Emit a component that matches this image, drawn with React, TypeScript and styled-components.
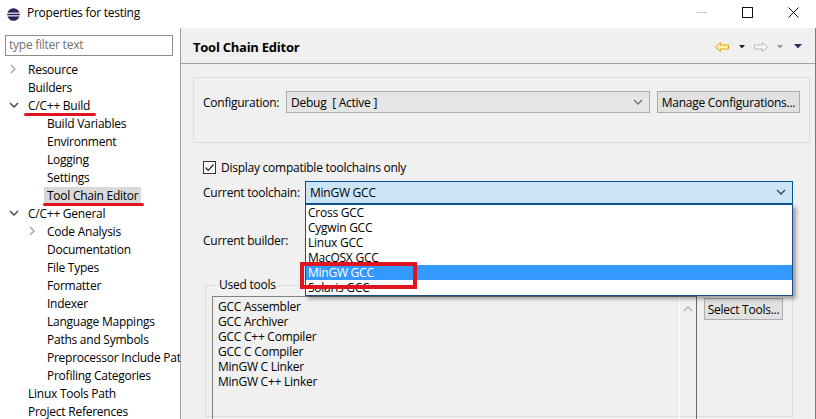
import styled, { createGlobalStyle } from 'styled-components';

const GlobalStyle = createGlobalStyle`
  html, body { margin: 0; padding: 0; }
  body {
    font-family: 'Open Sans', 'Noto Sans', sans-serif;
    font-size: 12px;
    letter-spacing: -0.25px;
    color: #000;
    background: #fff;
  }
`;

const Window = styled.div`
  width: 816px;
  height: 419px;
  display: flex;
  flex-direction: column;
  overflow: hidden;
`;

const TitleBar = styled.div`
  height: 28px;
  display: flex;
  align-items: center;
  background: #fff;
  padding-left: 7px;
`;

const TitleText = styled.span`
  margin-left: 7px;
  line-height: 16px;
  margin-top: -2px;
`;

const WinControls = styled.div`
  margin-left: auto;
  display: flex;
  align-items: center;
  height: 100%;
`;

const WinButton = styled.div`
  width: 46px;
  height: 100%;
  display: flex;
  align-items: center;
  justify-content: center;
  margin-top: -3px;
`;

const Body = styled.div`
  flex: 1;
  display: flex;
  min-height: 0;
`;

const Sidebar = styled.div`
  width: 180px;
  border-right: 1px solid #a0a0a0;
  background: #fff;
  overflow: hidden;
  padding-top: 7px;
`;

const FilterBox = styled.div`
  margin-left: 5px;
  width: 163px;
  height: 19px;
  border: 1px solid #8c8c8c;
  color: #707070;
  padding-left: 3px;
  line-height: 18px;
  box-sizing: content-box;
`;

const Tree = styled.div`
  margin-top: 4px;
`;

const TreeRow = styled.div<{ level: number }>`
  height: 18px;
  display: flex;
  align-items: center;
  padding-left: ${({ level }) => 8 + level * 19}px;
  white-space: nowrap;
`;

const Twisty = styled.span`
  width: 12px;
  margin-right: 8px;
  display: flex;
  justify-content: center;
  flex-shrink: 0;
`;

const TreeLabel = styled.span<{ selected?: boolean }>`
  position: relative;
  margin-left: -3px;
  padding: 0 3px;
  line-height: 17px;
  background: ${({ selected }) => (selected ? '#d9d9d9' : 'transparent')};
`;

const RedUnderline = styled.span`
  position: absolute;
  left: -1px;
  right: -3px;
  bottom: -2px;
  height: 3px;
  border-radius: 2px;
  background: #e0141e;
`;

const Main = styled.div`
  flex: 1;
  background: #f0f0f0;
  border-right: 1px solid #7a7a7a;
  display: flex;
  flex-direction: column;
  min-width: 0;
`;

const Header = styled.div`
  height: 35px;
  border-bottom: 1px solid #a0a0a0;
  display: flex;
  align-items: center;
  padding-left: 12px;
  padding-right: 13px;
`;

const HeaderTitle = styled.span`
  font-weight: bold;
  font-size: 13px;
  margin-top: 3px;
`;

const NavIcons = styled.div`
  margin-left: auto;
  display: flex;
  align-items: center;
  margin-top: 2px;
`;

const NavGap = styled.span<{ size: number }>`
  width: ${({ size }) => size}px;
`;

const Content = styled.div`
  padding: 13px 5px 0 12px;
  display: flex;
  flex-direction: column;
`;

const GroupBox = styled.div`
  border: 1px solid #dcdcdc;
  padding: 13px 9px 0 9px;
  box-sizing: border-box;
  height: 66px;
`;

const Row = styled.div`
  display: flex;
  align-items: center;
  height: 22px;
`;

const FieldLabel = styled.span<{ width: number }>`
  width: ${({ width }) => width}px;
  flex-shrink: 0;
`;

const Combo = styled.div<{ focused?: boolean; width: number }>`
  width: ${({ width }) => width}px;
  height: ${({ focused }) => (focused ? 23 : 22)}px;
  box-sizing: border-box;
  border: 1px solid ${({ focused }) => (focused ? '#005499' : '#acacac')};
  background: ${({ focused }) => (focused ? '#cce4f7' : '#e5e5e5')};
  display: flex;
  align-items: center;
  padding: 0 6px 0 4px;
  position: relative;
`;

const ComboText = styled.span`
  flex: 1;
  white-space: pre;
`;

const Button = styled.div<{ width: number }>`
  width: ${({ width }) => width}px;
  height: 22px;
  box-sizing: border-box;
  border: 1px solid #adadad;
  background: #e1e1e1;
  display: flex;
  align-items: center;
  justify-content: center;
  margin-left: 7px;
  flex-shrink: 0;
`;

const Lower = styled.div`
  padding-left: 10px;
  display: flex;
  flex-direction: column;
`;

const CheckRow = styled.div`
  display: flex;
  align-items: center;
  height: 18px;
  margin-top: 15px;
  margin-bottom: 5px;
`;

const CheckBox = styled.span`
  width: 13px;
  height: 13px;
  box-sizing: border-box;
  border: 1px solid #333;
  background: #fff;
  display: flex;
  align-items: center;
  justify-content: center;
  margin-right: 5px;
`;

const DropList = styled.div`
  position: absolute;
  left: -1px;
  top: 22px;
  width: 488px;
  height: 92px;
  box-sizing: border-box;
  border: 1px solid #1c4f7f;
  background: #fff;
  box-shadow: 3px 3px 4px rgba(0, 0, 0, 0.35);
  z-index: 2;
`;

const DropItem = styled.div<{ selected?: boolean }>`
  height: 15px;
  line-height: 15px;
  padding-left: 2px;
  background: ${({ selected }) => (selected ? '#3399ff' : 'transparent')};
  color: ${({ selected }) => (selected ? '#fff' : '#000')};
`;

const RedBox = styled.div`
  position: absolute;
  left: -6px;
  top: 80px;
  width: 117px;
  height: 27px;
  box-sizing: border-box;
  border: 4px solid #e0141e;
  z-index: 3;
`;

const BuilderRow = styled(Row)`
  margin-top: 26px;
`;

const Fieldset = styled.fieldset`
  margin: 26px 0 0 2px;
  width: 588px;
  box-sizing: border-box;
  border: 1px solid #dcdcdc;
  padding: 3px 9px 0 6px;
  height: 140px;
  display: flex;
  align-items: flex-start;
`;

const Legend = styled.legend`
  padding: 0 3px;
  margin-left: 4px;
  line-height: 16px;
`;

const ToolsList = styled.div`
  width: 485px;
  height: 130px;
  box-sizing: border-box;
  border: 1px solid #828282;
  border-right-color: #6a6a6a;
  display: flex;
  flex-shrink: 0;
`;

const ToolsItems = styled.div`
  flex: 1;
  padding: 2px 0 0 5px;
  line-height: 15px;
`;

const ScrollTrack = styled.div`
  width: 16px;
  border-left: 1px solid #fff;
  display: flex;
  justify-content: center;
  padding-top: 7px;
`;

const SelectButton = styled(Button)`
  margin-top: 2px;
`;

const Chevron = ({ dir, color }: { dir: 'right' | 'down' | 'up'; color: string }) => {
  const pts =
    dir === 'right' ? '2,1 6,5 2,9' : dir === 'down' ? '1,3 5,7 9,3' : '1,7 5,3 9,7';
  return (
    <svg width="10" height="10" viewBox="0 0 10 10">
      <polyline points={pts} fill="none" stroke={color} strokeWidth="1.3" />
    </svg>
  );
};

const EclipseIcon = () => (
  <svg width="13" height="13" viewBox="0 0 13 13">
    <circle cx="6.5" cy="6.5" r="6.3" fill="#2c2255" />
    <rect x="0" y="4.6" width="13" height="1.1" fill="#fff" />
    <rect x="0" y="7.3" width="13" height="1.1" fill="#fff" />
  </svg>
);

const Triangle = ({ color, size }: { color: string; size: number }) => (
  <svg width={size} height={size / 2 + 1} viewBox={`0 0 ${size} ${size / 2 + 1}`}>
    <polygon points={`0,0 ${size},0 ${size / 2},${size / 2 + 0.5}`} fill={color} />
  </svg>
);

const NavArrow = ({ dir, fill, stroke }: { dir: 'left' | 'right'; fill: string; stroke: string }) => (
  <svg
    width="14"
    height="10"
    viewBox="0 0 14 10"
    style={{ transform: dir === 'right' ? 'scaleX(-1)' : undefined }}
  >
    <polygon
      points="0.5,5 5.5,0.5 5.5,3 13.5,3 13.5,7 5.5,7 5.5,9.5"
      fill={fill}
      stroke={stroke}
      strokeWidth="1"
      strokeLinejoin="round"
    />
  </svg>
);

type TreeItem = {
  label: string;
  level: number;
  arrow?: 'open' | 'closed';
  underline?: boolean;
  selected?: boolean;
};

const treeItems: TreeItem[] = [
  { label: 'Resource', level: 0, arrow: 'closed' },
  { label: 'Builders', level: 0 },
  { label: 'C/C++ Build', level: 0, arrow: 'open', underline: true },
  { label: 'Build Variables', level: 1 },
  { label: 'Environment', level: 1 },
  { label: 'Logging', level: 1 },
  { label: 'Settings', level: 1 },
  { label: 'Tool Chain Editor', level: 1, selected: true, underline: true },
  { label: 'C/C++ General', level: 0, arrow: 'open' },
  { label: 'Code Analysis', level: 1, arrow: 'closed' },
  { label: 'Documentation', level: 1 },
  { label: 'File Types', level: 1 },
  { label: 'Formatter', level: 1 },
  { label: 'Indexer', level: 1 },
  { label: 'Language Mappings', level: 1 },
  { label: 'Paths and Symbols', level: 1 },
  { label: 'Preprocessor Include Paths, Macros etc.', level: 1 },
  { label: 'Profiling Categories', level: 1 },
  { label: 'Linux Tools Path', level: 0 },
  { label: 'Project References', level: 0 },
];

const toolchains = ['Cross GCC', 'Cygwin GCC', 'Linux GCC', 'MacOSX GCC', 'MinGW GCC', 'Solaris GCC'];
const usedTools = [
  'GCC Assembler',
  'GCC Archiver',
  'GCC C++ Compiler',
  'GCC C Compiler',
  'MinGW C Linker',
  'MinGW C++ Linker',
];

const App = () => {
  return (
    <>
      <GlobalStyle />
      <Window>
        {/* タイトルバー */}
        <TitleBar>
          <EclipseIcon />
          <TitleText>Properties for testing</TitleText>
          <WinControls>
            <WinButton>
              <svg width="11" height="2" viewBox="0 0 11 2">
                <rect width="11" height="1" fill="#c8c8c8" />
              </svg>
            </WinButton>
            <WinButton>
              <svg width="11" height="11" viewBox="0 0 11 11">
                <rect x="0.5" y="0.5" width="10" height="10" fill="none" stroke="#111" />
              </svg>
            </WinButton>
            <WinButton>
              <svg width="11" height="11" viewBox="0 0 11 11">
                <path d="M0.5 0.5 L10.5 10.5 M10.5 0.5 L0.5 10.5" stroke="#111" strokeWidth="1" />
              </svg>
            </WinButton>
          </WinControls>
        </TitleBar>
        <Body>
          {/* サイドバー */}
          <Sidebar>
            <FilterBox>type filter text</FilterBox>
            <Tree>
              {treeItems.map((item) => (
                <TreeRow key={item.label} level={item.level}>
                  <Twisty>
                    {item.arrow === 'closed' && <Chevron dir="right" color="#a0a0a0" />}
                    {item.arrow === 'open' && <Chevron dir="down" color="#404040" />}
                  </Twisty>
                  <TreeLabel selected={item.selected}>
                    {item.label}
                    {item.underline && <RedUnderline />}
                  </TreeLabel>
                </TreeRow>
              ))}
            </Tree>
          </Sidebar>
          {/* コンテンツ */}
          <Main>
            <Header>
              <HeaderTitle>Tool Chain Editor</HeaderTitle>
              <NavIcons>
                <NavArrow dir="left" fill="#fff1b0" stroke="#e0a020" />
                <NavGap size={10} />
                <Triangle color="#222" size={6} />
                <NavGap size={9} />
                <NavArrow dir="right" fill="#fafafa" stroke="#b8b8b8" />
                <NavGap size={9} />
                <Triangle color="#999" size={6} />
                <NavGap size={11} />
                <Triangle color="#3a2a5a" size={8} />
              </NavIcons>
            </Header>
            <Content>
              <GroupBox>
                <Row>
                  <FieldLabel width={83}>Configuration:</FieldLabel>
                  <Combo width={364}>
                    <ComboText>Debug  [ Active ]</ComboText>
                    <Chevron dir="down" color="#707070" />
                  </Combo>
                  <Button width={143}>Manage Configurations...</Button>
                </Row>
              </GroupBox>
              <Lower>
                <CheckRow>
                  <CheckBox>
                    <svg width="11" height="11" viewBox="0 0 11 11">
                      <polyline points="1.5,5.5 4.2,8.3 9.5,2.5" fill="none" stroke="#222" strokeWidth="1.2" />
                    </svg>
                  </CheckBox>
                  Display compatible toolchains only
                </CheckRow>
                <Row>
                  <FieldLabel width={102}>Current toolchain:</FieldLabel>
                  <Combo width={488} focused>
                    <ComboText>MinGW GCC</ComboText>
                    <Chevron dir="down" color="#404040" />
                    <DropList>
                      {toolchains.map((t) => (
                        <DropItem key={t} selected={t === 'MinGW GCC'}>
                          {t}
                        </DropItem>
                      ))}
                    </DropList>
                    <RedBox />
                  </Combo>
                </Row>
                <BuilderRow>
                  <FieldLabel width={102}>Current builder:</FieldLabel>
                </BuilderRow>
                <Fieldset>
                  <Legend>Used tools</Legend>
                  <ToolsList>
                    <ToolsItems>
                      {usedTools.map((t) => (
                        <div key={t}>{t}</div>
                      ))}
                    </ToolsItems>
                    <ScrollTrack>
                      <Chevron dir="up" color="#b0b0b0" />
                    </ScrollTrack>
                  </ToolsList>
                  <SelectButton width={79}>Select Tools...</SelectButton>
                </Fieldset>
              </Lower>
            </Content>
          </Main>
        </Body>
      </Window>
    </>
  );
};

export default App;
